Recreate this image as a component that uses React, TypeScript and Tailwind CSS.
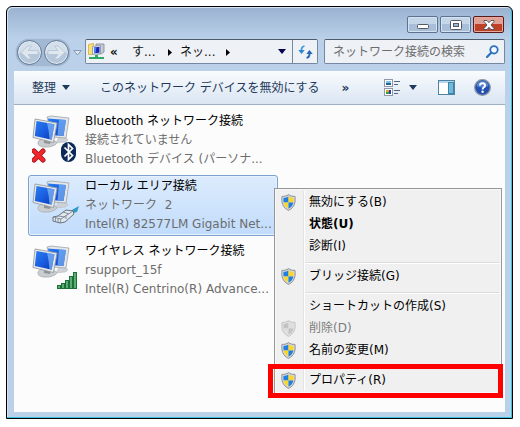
import React from "react";

function Monitors() {
  return (
    <g>
      <path d="M27 23l7 1q4 2-1 4l-9 1z" fill="#cfd3d6" stroke="#b0b4b8" strokeWidth=".5" />
      <path d="M6 28q1-3 7-3l8 1q6 2 2 5-5 3-12 2-6-1-5-5z" fill="#c9cdd0" stroke="#9ea2a7" strokeWidth=".6" />
      <path d="M12 25l7 1-1 4-6-1z" fill="#8f9498" />
      <path d="M15 3l4-1 18 2-3 20-14-1z" fill="#e4e7e9" stroke="#9fa4a9" strokeWidth=".8" />
      <path d="M16 4.500l18 1.500-2.500 16-13-1z" fill="url(#screen)" />
      <path d="M27 5.500l7 .5-2.500 16-6-.5z" fill="#7fb6f3" opacity=".7" />
      <path d="M3 5l22 4-3.500 19.500L1 23.500z" fill="#e8eaec" stroke="#979ca2" strokeWidth=".9" />
      <path d="M4.500 7l18 3.300-2.800 15.500L2.800 22z" fill="url(#screen)" />
      <path d="M15 8.900l7.500 1.400-2.800 15.500-2.200-.5q-.5-9-2.500-16.400z" fill="#8fc3f7" opacity=".65" />
    </g>
  );
}

function ConnectionIcon({ kind }: { kind: "bluetooth" | "lan" | "wifi" }) {
  return (
    <svg width="50" height="50" viewBox="0 0 50 50" aria-hidden="true" className="shrink-0">
      <defs>
        <linearGradient id="screen" x1="0" y1="0" x2="1" y2="1">
          <stop offset="0" stopColor="#2a7df0" />
          <stop offset=".5" stopColor="#1a5ee0" />
          <stop offset="1" stopColor="#0a35b8" />
        </linearGradient>
      </defs>
      <Monitors />
      {kind === "bluetooth" && (
        <g>
          <path d="M2 37l9 9M11 37l-9 9" stroke="#9c1216" strokeWidth="5" strokeLinecap="round" />
          <path d="M2 37l9 9M11 37l-9 9" stroke="#f0282c" strokeWidth="3.400" strokeLinecap="round" />
          <rect x="29" y="28" width="15" height="20" rx="7.500" fill="#0b2a58" />
          <path d="M32.500 33.500l8 8-4 4V30.500l4 4-8 8" fill="none" stroke="#fff" strokeWidth="1.700" />
        </g>
      )}
      {kind === "lan" && (
        <g strokeLinejoin="round">
          <path d="M38 32l9-5-2 6-4 1z" fill="#2f9cc4" />
          <path d="M21 38l5-1 8-6 7 1 1 3-9 8-5 1-7-2z" fill="#e2e8ee" stroke="#66727f" />
          <path d="M21 38l8 2 12-8M29 40l-1 4M26 37l7 1M31 33l6 2M23.500 39v3.500M26 39.500V43M34 36v4" fill="none" stroke="#7b8895" strokeWidth=".9" />
        </g>
      )}
      {kind === "wifi" && (
        <g fill="#5aae74" stroke="#1d6e39" strokeWidth="1">
          <rect x="25.500" y="41.500" width="3" height="3" />
          <rect x="29.500" y="39.500" width="3" height="5" />
          <rect x="33.500" y="36.500" width="3" height="8" />
          <rect x="37.500" y="32.500" width="3" height="12" />
          <rect x="41.500" y="28.500" width="3" height="16" />
        </g>
      )}
    </svg>
  );
}

function Shield({ muted = false }: { muted?: boolean }) {
  const blue = muted ? "#c3c3c3" : "#1f7fe0";
  const gold = muted ? "#dedede" : "#fcd62c";
  return (
    <svg width="15" height="17" viewBox="0 0 15 17" aria-hidden="true">
      <path
        d="M7.500.6C5.600 2 3.400 2.500 1 2.400.3 8.500 1.500 13.500 7.500 16.400 13.500 13.500 14.700 8.500 14 2.400 11.600 2.500 9.400 2 7.500.6z"
        fill={muted ? "#e2e2e2" : "#d6dade"}
        stroke={muted ? "#c4c4c4" : "#8b8e92"}
      />
      <path d="M7.500 2.400v6H2.600Q2.200 6 2.500 3.900 5.500 3.800 7.500 2.400z" fill={blue} />
      <path d="M7.500 2.400v6h4.900q.4-2.400.1-4.500-3-.1-5-1.500z" fill={gold} />
      <path d="M7.500 8.400v6.300Q3.500 12.500 2.600 8.400z" fill={gold} />
      <path d="M7.500 8.400v6.300q4-2.200 4.900-6.300z" fill={blue} />
    </svg>
  );
}

function Triangle({ className = "" }: { className?: string }) {
  return (
    <svg width="8" height="5" viewBox="0 0 8 5" aria-hidden="true" className={className}>
      <path d="M0 0h8L4 5z" fill="currentColor" />
    </svg>
  );
}

function Crumb() {
  return (
    <svg width="4" height="7" viewBox="0 0 4 7" aria-hidden="true" className="mt-px shrink-0">
      <path d="M0 0l4 3.500L0 7z" fill="#000" />
    </svg>
  );
}

function Chevrons({ left = false }: { left?: boolean }) {
  return <span className="text-xs leading-4 font-bold">{left ? "«" : "»"}</span>;
}

function CaptionButtons() {
  const plain =
    "flex h-[17px] w-[31px] items-center justify-center rounded-[2px] border border-[#5d7290] bg-linear-to-b from-[#c5d6e9] from-45% to-[#a9bfd9] to-50% shadow-[inset_0_0_0_1px_#d5e2f0]";
  return (
    <div className="flex justify-end gap-[2px] pr-[8px]">
      <button aria-label="最小化" className={plain}>
        <svg width="12" height="5" viewBox="0 0 12 5" className="mt-[3px]">
          <rect x=".5" y=".5" width="11" height="4" rx="1" fill="#fff" stroke="#535766" />
        </svg>
      </button>
      <button aria-label="最大化" className={plain}>
        <svg width="12" height="10" viewBox="0 0 12 10">
          <rect x=".5" y=".5" width="11" height="9" rx="1" fill="#fff" stroke="#535766" />
          <rect x="3.500" y="3.500" width="5" height="3" fill="#9db4ce" stroke="#535766" />
        </svg>
      </button>
      <button
        aria-label="閉じる"
        className="flex h-[17px] w-[31px] items-center justify-center rounded-[2px] border border-[#5a1a1c] bg-linear-to-b from-[#e0a094] from-45% to-[#bd4127] to-50% shadow-[inset_0_0_0_1px_#e3aa9f]"
      >
        <svg width="12" height="10" viewBox="0 0 12 10">
          <path d="M1 .5h3L6 2.700 8 .5h3v1L8 5l3 3.500v1H8L6 7.300 4 9.500H1v-1L4 5 1 1.500z" fill="#fff" stroke="#535766" />
        </svg>
      </button>
    </div>
  );
}

function NavButtons() {
  return (
    <div className="flex h-[27px] w-[54px] shrink-0 items-center gap-[2px] rounded-full bg-[#a3b9d3] px-px shadow-[0_0_1px_#7f95b0]">
      {["戻る", "進む"].map((name, i) => (
        <button
          key={name}
          aria-label={name}
          className="flex size-[25px] items-center justify-center rounded-full border border-[#647a94] bg-linear-to-b from-[#d3dfeb] from-45% to-[#b4c7db] to-55% shadow-[inset_0_0_0_1px_#dfe8f1]"
        >
          <svg width="19" height="15" viewBox="0 0 19 15" className={i === 1 ? "rotate-180" : ""}>
            <path d="M1 7.500L8 1h3.500L8 5.500h10v4H8l3.500 4.500H8z" fill="#dfe7ef" stroke="#b3c3d4" strokeWidth=".8" />
          </svg>
        </button>
      ))}
    </div>
  );
}

function AddressBar() {
  return (
    <div className="flex gap-[6px] pr-[7px] pl-[9px]">
      <NavButtons />
      <div className="-ml-[3px] flex w-[9px] shrink-0 items-center">
        <svg width="9" height="6" viewBox="0 0 9 6" aria-hidden="true">
          <path d="M.8.500h7.400L4.500 5z" fill="#dfe9f4" stroke="#8599b2" />
        </svg>
      </div>
      <div className="-ml-[3px] flex h-[25px] min-w-0 flex-1 items-center rounded-[2px] border border-[#7488a1] border-t-[#4f5b6b] bg-[#eef1f6] pl-[2px] text-[#111]">
        <svg width="17" height="17" viewBox="0 0 17 17" aria-hidden="true" className="shrink-0">
          <path d="M.5 1.500l5-1v11h-5z" fill="#f6df7c" stroke="#cfae3e" strokeWidth=".8" />
          <path d="M8 1h8v8l-3 2H8z" fill="#c5ccd5" stroke="#7d8794" strokeWidth=".8" />
          <path d="M4.500 3.500l8-1v8l-8 1z" fill="#e6eaf0" stroke="#8a94a3" strokeWidth=".8" />
          <path d="M6 4.500l5.500-.8v6L6 10.300z" fill="#1528b8" />
          <path d="M6 4.500l2.500-.3L7.500 10 6 10.300z" fill="#4f83ea" />
          <path d="M7 12h3v2h6v2H1v-2h6z" fill="#2fa865" />
        </svg>
        <span className="ml-[5px] w-[22px]">
          <Chevrons left />
        </span>
        <span className="w-[36px]">す...</span>
        <Crumb />
        <span className="ml-[8px] w-[46px] whitespace-nowrap">ネッ...</span>
        <Crumb />
        <button aria-label="履歴" className="mr-[6px] ml-auto text-[#00004e]">
          <Triangle />
        </button>
        <button
          aria-label="最新の情報に更新"
          className="flex h-full w-[25px] shrink-0 items-center justify-center border-l border-[#7488a1]"
        >
          <svg width="15" height="14" viewBox="0 0 15 14">
            <path d="M3.500 6Q3 2 6.500 1" fill="none" stroke="#3f9be0" strokeWidth="1.800" />
            <path d="M.3 5h6.400L3.500 9z" fill="#2f86d0" />
            <path d="M11.500 8Q12 12 8.500 13" fill="none" stroke="#2468b4" strokeWidth="1.800" />
            <path d="M8.300 9h6.400L11.500 5z" fill="#2468b4" />
          </svg>
        </button>
      </div>
      <label className="flex h-[25px] w-[181px] shrink-0 items-center rounded-[2px] border border-[#7488a1] border-t-[#4f5b6b] bg-[#eef1f6] pr-[5px] pl-[8px]">
        <input
          aria-label="検索"
          placeholder="ネットワーク接続の検索"
          className="min-w-0 flex-1 bg-transparent outline-none placeholder:text-[#6d6d6d]"
        />
        <svg width="13" height="13" viewBox="0 0 13 13" aria-hidden="true">
          <circle cx="8" cy="4.800" r="3.700" fill="#f4f9fe" stroke="#2b72bd" strokeWidth="1.800" />
          <path d="M5.200 7.800L1 12" stroke="#2b72bd" strokeWidth="2.200" strokeLinecap="round" />
        </svg>
      </label>
    </div>
  );
}

function Toolbar() {
  return (
    <div className="flex h-[34px] items-center border-b border-[#a0afc3] bg-linear-to-b from-[#fafcfe] via-[#e9f0f8] via-50% to-[#dae5f2] pr-[14px] pl-[18px] text-[#1e395b]">
      <button className="flex items-center gap-[6px]">
        整理
        <Triangle />
      </button>
      <button className="ml-[30px] whitespace-nowrap">このネットワーク デバイスを無効にする</button>
      <button aria-label="その他" className="ml-[22px]">
        <Chevrons />
      </button>
      <button aria-label="表示方法の変更" className="ml-auto flex items-center gap-[9px]">
        <svg width="16" height="17" viewBox="0 0 16 17">
          <rect x=".5" y=".5" width="8" height="7" fill="#fff" stroke="#8d99a8" />
          <path d="M2 2h5v2H2z" fill="#7fbff0" />
          <path d="M2 4h5v2H2z" fill="#22618e" />
          <rect x=".5" y="9.500" width="8" height="7" fill="#fff" stroke="#8d99a8" />
          <path d="M2 11h3v2H2z" fill="#d9a916" />
          <path d="M5 11h2v4H5z" fill="#2b3ab8" />
          <path d="M2 13h3v2H2z" fill="#3c9f45" />
          <path d="M10 2.500h6M10 5.500h4M10 11.500h6M10 14.500h4" stroke="#54657a" />
        </svg>
        <Triangle />
      </button>
      <button aria-label="プレビュー ウィンドウ" className="ml-[21px]">
        <svg width="17" height="15" viewBox="0 0 17 15">
          <rect x=".5" y=".5" width="16" height="14" fill="#fff" stroke="#4a84a6" />
          <path d="M1 1h15v2H1z" fill="#b9d6e6" />
          <rect x="10.500" y="2.500" width="5" height="11" fill="#6fb9dc" stroke="#3f83a8" />
        </svg>
      </button>
      <button aria-label="ヘルプ" className="ml-[19px]">
        <svg width="17" height="17" viewBox="0 0 17 17">
          <circle cx="8.500" cy="8.500" r="7.800" fill="#2350b0" stroke="#8c95a6" strokeWidth="1.300" />
          <path d="M2.500 7q1-5 6-5t6 5q-6 3-12 0z" fill="#6f9be0" opacity=".7" />
          <path d="M6 6.500Q6 4.200 8.500 4.200T11 6.400Q11 7.700 9.600 8.500 8.600 9.200 8.600 10.400" fill="none" stroke="#fff" strokeWidth="1.900" />
          <circle cx="8.600" cy="12.700" r="1.200" fill="#fff" />
        </svg>
      </button>
    </div>
  );
}

const connections = [
  { kind: "bluetooth", name: "Bluetooth ネットワーク接続", status: "接続されていません", device: "Bluetooth デバイス (パーソナ..." },
  { kind: "lan", name: "ローカル エリア接続", status: "ネットワーク  2", device: "Intel(R) 82577LM Gigabit Net...", selected: true },
  { kind: "wifi", name: "ワイヤレス ネットワーク接続", status: "rsupport_15f", device: "Intel(R) Centrino(R) Advance..." },
] as const;

function ConnectionList() {
  return (
    <ul className="flex w-[264px] flex-col gap-[4px] pt-[5px] pl-[14px]">
      {connections.map((c) => (
        <li
          key={c.kind}
          className={
            "selected" in c
              ? "flex gap-[3px] rounded-[3px] border border-[#7da2ce] bg-linear-to-b from-[#dcebfc] to-[#c1dcfc] py-px pl-[3px] shadow-[inset_0_0_0_1px_#e6f1fd]"
              : "flex gap-[3px] border border-transparent py-px pl-[3px]"
          }
        >
          <div className="pt-[2px]">
            <ConnectionIcon kind={c.kind} />
          </div>
          <div className="leading-[19px] whitespace-pre text-[#6d6d6d]">
            <p className="text-black">{c.name}</p>
            <p>{c.status}</p>
            <p>{c.device}</p>
          </div>
        </li>
      ))}
    </ul>
  );
}

type Entry = { label: string; shield?: boolean; bold?: boolean; disabled?: boolean; marked?: boolean };

const groups: Entry[][] = [
  [{ label: "無効にする(B)", shield: true }, { label: "状態(U)", bold: true }, { label: "診断(I)" }],
  [{ label: "ブリッジ接続(G)", shield: true }],
  [
    { label: "ショートカットの作成(S)" },
    { label: "削除(D)", shield: true, disabled: true },
    { label: "名前の変更(M)", shield: true },
  ],
  [{ label: "プロパティ(R)", shield: true, marked: true }],
];

function ContextMenu() {
  return (
    <div
      role="menu"
      className="absolute top-[83px] left-[260px] w-[228px] border border-[#979797] bg-[#f0f0f0] p-[2px] shadow-[inset_0_0_0_1px_#f7f7f7]"
    >
      {groups.map((group, i) => (
        <div key={i}>
          {i > 0 && (
            <div role="separator" className="flex h-[8px]">
              <div className="w-[28px] shrink-0 border-r border-white shadow-[inset_-1px_0_0_#e2e3e3]" />
              <div className="mt-[5px] h-[2px] flex-1 border-t border-[#dcdcdc] bg-white" />
            </div>
          )}
          {group.map((e) => (
            <button
              key={e.label}
              role="menuitem"
              disabled={e.disabled}
              className="relative flex h-[22px] w-full items-stretch text-left text-black disabled:text-[#7d7d7d]"
            >
              <span className="flex w-[28px] shrink-0 items-center border-r border-white pl-[4px] shadow-[inset_-1px_0_0_#e2e3e3]">
                {e.shield && <Shield muted={e.disabled} />}
              </span>
              <span className={e.bold ? "pl-[4px] leading-[22px] font-bold" : "pl-[4px] leading-[22px]"}>{e.label}</span>
              {e.marked && (
                <span className="absolute -top-[5px] -right-[4px] -bottom-[7px] -left-[9px] border-[5px] border-[#fe0000]" />
              )}
            </button>
          ))}
        </div>
      ))}
    </div>
  );
}

export default function App() {
  return (
    <div className="flex h-screen min-h-[427px] bg-white pt-[6px] pr-[7px] pb-[8px] pl-[6px] font-['DejaVu_Sans','Noto_Sans_CJK_JP',sans-serif] text-xs">
      <div className="flex flex-1 flex-col rounded-t-[6px] border border-black bg-linear-to-b from-[#99b2cf] to-[#bbd1ea] to-[32px] pb-[6px] shadow-[inset_-1px_-1px_0_#35c3e0,inset_1px_1px_0_#d5e3f1]">
        <header className="flex flex-col gap-[6px] pt-[9px] pb-[5px]">
          <CaptionButtons />
          <AddressBar />
        </header>
        <div className="mr-[7px] ml-[7px] flex flex-1 flex-col">
          <Toolbar />
          <main className="relative flex-1 bg-[#fcfcfc]">
            <ConnectionList />
            <ContextMenu />
          </main>
        </div>
      </div>
    </div>
  );
}
